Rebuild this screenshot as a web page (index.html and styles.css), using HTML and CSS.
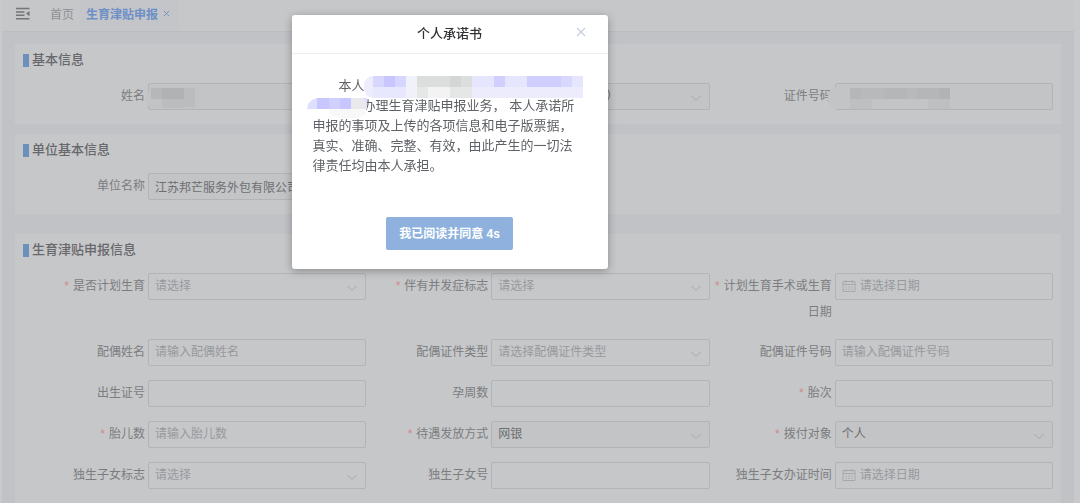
FILE: index.html
```html
<!DOCTYPE html>
<html lang="zh-CN">
<head>
<meta charset="utf-8">
<title>生育津贴申报</title>
<link rel="stylesheet" href="styles.css">
</head>
<body>
<svg class="defs" aria-hidden="true">
  <symbol id="chevron" viewBox="0 0 12 12"><path d="M1.5 4L6 8.5L10.5 4" fill="none" stroke="currentColor"/></symbol>
  <symbol id="calendar" viewBox="0 0 14 14"><path d="M1 2.5H13V12.500H1ZM1 5.500H13M4 1V4M10 1V4M3.500 8H5M6.300 8H7.800M9 8H10.500M3.500 10.300H5M6.300 10.300H7.800M9 10.300H10.500" fill="none" stroke="currentColor"/></symbol>
</svg>
<div class="app">
  <header class="tabs">
    <button class="fold" aria-label="收起菜单">
      <svg viewBox="0 0 14 13" width="14" height="13"><path d="M0 1.500H13.500M0 5H8.500M0 8.300H8.500M0 11.800H13.500" stroke="currentColor" stroke-width="1.400" fill="none"/><path d="M13.500 4V9.300L10 6.600Z" fill="currentColor"/></svg>
    </button>
    <a class="tab" href="#">首页</a>
    <a class="tab tab-active" href="#">生育津贴申报<svg viewBox="0 0 8 8" width="7" height="7"><path d="M1 1L7 7M7 1L1 7" stroke="currentColor" fill="none"/></svg></a>
  </header>
  <main class="main">
    <section class="card">
      <h2 class="title">基本信息</h2>
      <div class="grid">
        <div class="item"><label for="name">姓名</label><div class="field"><input id="name" type="text" disabled>
          <svg class="mask mask-name" viewBox="0 0 55 22" aria-hidden="true"><rect width="55" height="22" rx="10" fill="#c2c3c5"/><path d="M5 1H38V12H5Z" fill="#b5b7b9"/><path d="M16 1H38V12H16Z" fill="#b0b2b4"/><path d="M38 1H49V20H38ZM16 12H38V21H16Z" fill="#babcbe"/></svg></div></div>
        <div class="item"><label for="idtype">证件类型</label><div class="field"><select id="idtype" disabled><option>居民身份证（户口簿）</option></select><svg class="arrow"><use href="#chevron"/></svg></div></div>
        <div class="item"><label for="idno">证件号码</label><div class="field"><input id="idno" type="text" disabled>
          <svg class="mask mask-id" viewBox="0 0 164 23" aria-hidden="true"><path d="M10 0H124V11H164V18Q164 22 156 22H10Q0 22 0 10Q0 0 10 0Z" fill="#c2c4c6"/><path d="M22 1H122V12H22Z" fill="#b4b6b8"/><path d="M33 1H56V12H33ZM78 1H89V12H78Z" fill="#b7b9bb"/><path d="M111 1H122V12H111Z" fill="#b0b2b5"/><path d="M22 12H44V22H22ZM100 12H122V22H100Z" fill="#bdbfc1"/></svg></div></div>
      </div>
    </section>
    <section class="card">
      <h2 class="title">单位基本信息</h2>
      <div class="grid">
        <div class="item"><label for="company">单位名称</label><div class="field"><input id="company" type="text" value="江苏邦芒服务外包有限公司" disabled></div></div>
      </div>
    </section>
    <section class="card card-main">
      <h2 class="title">生育津贴申报信息</h2>
      <div class="grid">
        <div class="item"><label class="req" for="plan">是否计划生育</label><div class="field"><select id="plan" class="empty"><option>请选择</option></select><svg class="arrow"><use href="#chevron"/></svg></div></div>
        <div class="item"><label class="req" for="complication">伴有并发症标志</label><div class="field"><select id="complication" class="empty"><option>请选择</option></select><svg class="arrow"><use href="#chevron"/></svg></div></div>
        <div class="item"><label class="req" for="opdate">计划生育手术或生育日期</label><div class="field"><svg class="cal"><use href="#calendar"/></svg><input id="opdate" class="date" type="text" placeholder="请选择日期"></div></div>

        <div class="item"><label for="spouse">配偶姓名</label><div class="field"><input id="spouse" type="text" placeholder="请输入配偶姓名"></div></div>
        <div class="item"><label for="spousetype">配偶证件类型</label><div class="field"><select id="spousetype" class="empty"><option>请选择配偶证件类型</option></select><svg class="arrow"><use href="#chevron"/></svg></div></div>
        <div class="item"><label for="spouseno">配偶证件号码</label><div class="field"><input id="spouseno" type="text" placeholder="请输入配偶证件号码"></div></div>

        <div class="item"><label for="birthno">出生证号</label><div class="field"><input id="birthno" type="text"></div></div>
        <div class="item"><label for="weeks">孕周数</label><div class="field"><input id="weeks" type="text"></div></div>
        <div class="item"><label class="req" for="parity">胎次</label><div class="field"><input id="parity" type="text"></div></div>

        <div class="item"><label class="req" for="babies">胎儿数</label><div class="field"><input id="babies" type="text" placeholder="请输入胎儿数"></div></div>
        <div class="item"><label class="req" for="paytype">待遇发放方式</label><div class="field"><select id="paytype" disabled><option>网银</option></select><svg class="arrow"><use href="#chevron"/></svg></div></div>
        <div class="item"><label class="req" for="payee">拨付对象</label><div class="field"><select id="payee" disabled><option>个人</option></select><svg class="arrow"><use href="#chevron"/></svg></div></div>

        <div class="item"><label for="only">独生子女标志</label><div class="field"><select id="only" class="empty"><option>请选择</option></select><svg class="arrow"><use href="#chevron"/></svg></div></div>
        <div class="item"><label for="onlyno">独生子女号</label><div class="field"><input id="onlyno" type="text"></div></div>
        <div class="item"><label for="onlydate">独生子女办证时间</label><div class="field"><svg class="cal"><use href="#calendar"/></svg><input id="onlydate" class="date" type="text" placeholder="请选择日期"></div></div>
      </div>
    </section>
  </main>
</div>

<div class="overlay">
  <div class="dialog" role="dialog" aria-labelledby="dialog-title">
    <div class="dialog-head">
      <h1 id="dialog-title">个人承诺书</h1>
      <button class="close" aria-label="关闭"><svg viewBox="0 0 10 10" width="10" height="10"><path d="M1 1L9 9M9 1L1 9" stroke="currentColor" fill="none" stroke-width="1.200"/></svg></button>
    </div>
    <div class="dialog-body">
      <p>本人<span class="gap gap-long"></span><span class="gap gap-short"></span>办理生育津贴申报业务， 本人承诺所申报的事项及上传的各项信息和电子版票据，真实、准确、完整、有效，由此产生的一切法律责任均由本人承担。</p>
      <svg class="mask mask-text" viewBox="0 0 277 43" aria-hidden="true">
        <path d="M66 0H276V22H66Q57 21 57 11Q57 1 66 0Z" fill="#ececfd"/>
        <path d="M66 0H99V11H66Z" fill="#d6d6fe"/><path d="M77 0H88V11H77Z" fill="#c7c6fe"/>
        <path d="M66 11H99V22H66Z" fill="#e7e7fd"/><path d="M99 0H110V22H99Z" fill="#f1f1fa"/>
        <path d="M110 0H165V11H110Z" fill="#dcdddd"/><path d="M143 0H154V11H143Z" fill="#d4d5d5"/>
        <path d="M110 11H165V22H110Z" fill="#e5e6e6"/><path d="M121 11H143V22H121Z" fill="#f3f3f3"/>
        <path d="M165 0H220V11H165Z" fill="#e5e5fe"/><path d="M187 0H198V11H187Z" fill="#d0cffe"/>
        <path d="M220 0H254V11H220Z" fill="#cfcefe"/><path d="M254 0H265V11H254Z" fill="#d8d8fe"/><path d="M265 0H276V11H265Z" fill="#e5e5fe"/>
        <path d="M22 33H59V38Q52 43 42 42Q22 43 22 33Z" fill="#f8f8f8"/>
        <path d="M10 22H60V33H0Q1 24 10 22Z" fill="#dedefe"/>
        <path d="M10 22H22V33H10ZM33 22H44V33H33Z" fill="#c7c6fe"/><path d="M22 22H33V33H22Z" fill="#d0cffe"/>
        <path d="M44 22H55Q61 27 59 33H44Z" fill="#e9e9eb"/>
      </svg>
    </div>
    <div class="dialog-foot"><button class="agree">我已阅读并同意 4s</button></div>
  </div>
</div>
</body>
</html>
```
FILE: styles.css
```css
* { box-sizing: border-box; }

body {
  margin: 0;
  background: #c8c9ca;
  color: #7b7d80;
  font-family: "Liberation Sans", "Noto Sans CJK SC", sans-serif;
  font-size: 12px;
}

button, input, select { font: inherit; }
.defs { position: absolute; width: 0; height: 0; }

.app {
  min-height: 100vh;
  margin: 0 6px 0 2px;
  display: flex;
  flex-direction: column;
  background: #c0c2c6;
}

.tabs {
  display: flex;
  align-items: stretch;
  height: 32px;
  padding: 0 0 4px 13px;
  background: #c6c7c9;
  border-bottom: 1px solid #bbbdc0;
}
.fold {
  display: flex;
  align-items: center;
  margin-right: 14px;
  padding: 0 0 0 1px;
  border: 0;
  background: none;
  color: #737578;
}
.tab {
  display: flex;
  align-items: center;
  padding: 0 6px;
  color: #8e9093;
  text-decoration: none;
}
.tab-active {
  gap: 5px;
  margin-bottom: -4px;
  padding: 0 9px 4px 6px;
  background: #c3c5c8;
  color: #6c8fc7;
  font-weight: 700;
}

.main {
  flex: 1;
  display: flex;
  flex-direction: column;
  gap: 10px;
  padding: 12px 13px 0;
}
.card {
  padding: 7px 8px 14px;
  background: #c6c7c9;
}
.card-main { flex: 1; margin-top: 10px; }

.title {
  display: flex;
  align-items: center;
  gap: 3px;
  margin: 0 0 14px;
  color: #66686b;
  font-size: 13px;
  font-weight: 500;
  line-height: 18px;
}
.title::before {
  content: "";
  width: 6px;
  height: 13px;
  background: #6d90ba;
}

.grid {
  display: grid;
  grid-template-columns: repeat(3, 1fr);
  row-gap: 14px;
}
.item {
  display: grid;
  grid-template-columns: 122px 1fr;
  column-gap: 3px;
  align-items: start;
}
.item label {
  text-align: right;
  line-height: 26px;
}
.req::before {
  content: "*";
  margin-right: 4px;
  color: #d08a8c;
}
.field { position: relative; }
.field input, .field select {
  display: block;
  width: 100%;
  height: 27px;
  padding: 0 6px 1px;
  border: 1px solid #b3b4b6;
  border-radius: 2px;
  background: #c6c7c9;
  color: #6c6e71;
  appearance: none;
}
.field input:disabled, .field select:disabled {
  background: #c3c4c6;
  color: #6c6e71;
  opacity: 1;
}
.field .empty, .field input::placeholder { color: #979a9d; opacity: 1; }
.field .date { padding-left: 24px; }
.arrow, .cal { position: absolute; color: #a6a8ab; pointer-events: none; }
.arrow { right: 8px; top: 9px; width: 12px; height: 12px; }
.cal { left: 7px; top: 6px; width: 14px; height: 14px; }

.mask { position: absolute; pointer-events: none; }
.mask-name { left: -2px; top: 4px; width: 55px; height: 22px; }
.mask-id { left: -7px; top: 4px; width: 164px; height: 23px; }
.mask-text { left: 15px; top: 22px; width: 277px; height: 43px; }

.overlay {
  position: fixed;
  inset: 0;
  padding: 15px 0 0 27%;
}
.dialog {
  width: 316px;
  border-radius: 3px;
  background: #fff;
  box-shadow: 0 2px 8px rgba(0, 0, 0, 0.3);
}
.dialog-head {
  position: relative;
  border-bottom: 1px solid #eeeff0;
}
.dialog-head h1 {
  margin: 0;
  padding: 9px 0;
  color: #303133;
  font-size: 13px;
  font-weight: 500;
  line-height: 20px;
  text-align: center;
}
.close {
  position: absolute;
  right: 22px;
  top: 12px;
  display: flex;
  padding: 0;
  border: 0;
  background: none;
  color: #c5cfdb;
}
.dialog-body {
  position: relative;
  padding: 22px 28px 0 21px;
  color: #5f6266;
  font-size: 13px;
  line-height: 20px;
}
.dialog-body p { margin: 0; text-indent: 2em; }
.gap { display: inline-block; height: 10px; }
.gap-long { width: 211px; }
.gap-short { width: 50px; }
.dialog-foot {
  display: flex;
  justify-content: center;
  padding: 41px 0 19px;
}
.agree {
  height: 33px;
  padding: 0 13px 2px;
  border: 0;
  border-radius: 2px;
  background: #8eb2dd;
  color: #fff;
  font-weight: 700;
}
```
